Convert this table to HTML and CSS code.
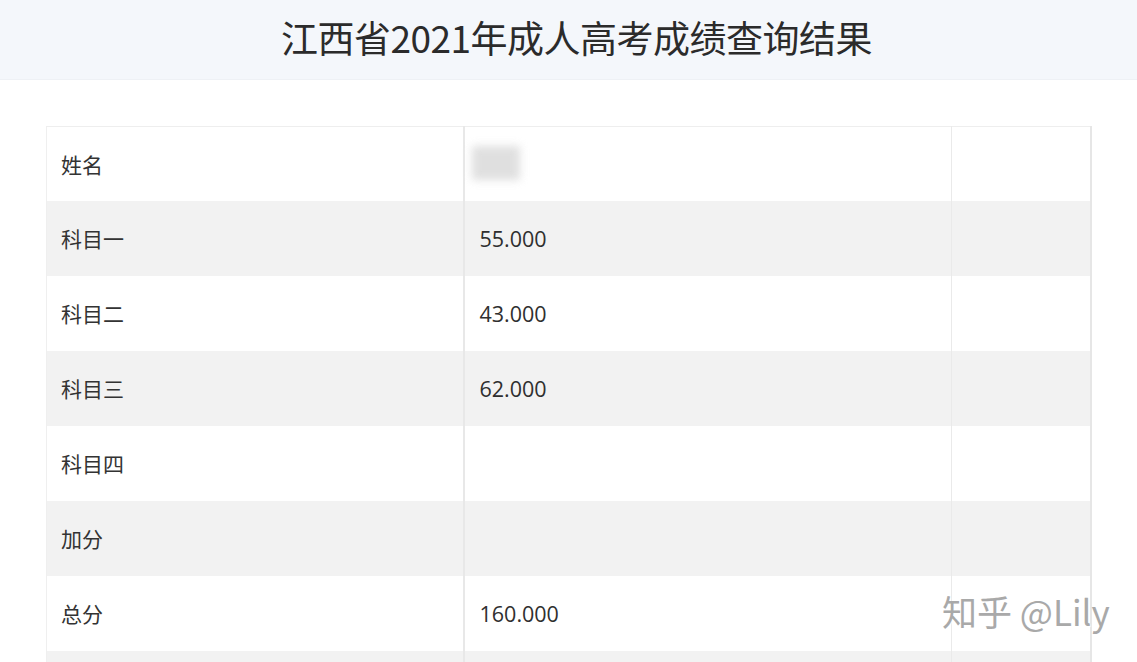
FILE: index.html
```html
<!DOCTYPE html>
<html lang="zh">
<head>
<meta charset="utf-8">
<link rel="stylesheet" href="styles.css">
</head>
<body>
<header class="header">
  <h1 class="title">江西省2021年成人高考成绩查询结果</h1>
</header>
<main class="content">
  <table class="result">
    <tr><td class="label">姓名</td><td class="value"><span class="blur"></span></td><td class="extra"></td></tr>
    <tr class="alt"><td class="label">科目一</td><td class="value">55.000</td><td class="extra"></td></tr>
    <tr><td class="label">科目二</td><td class="value">43.000</td><td class="extra"></td></tr>
    <tr class="alt"><td class="label">科目三</td><td class="value">62.000</td><td class="extra"></td></tr>
    <tr><td class="label">科目四</td><td class="value"></td><td class="extra"></td></tr>
    <tr class="alt"><td class="label">加分</td><td class="value"></td><td class="extra"></td></tr>
    <tr><td class="label">总分</td><td class="value">160.000</td><td class="extra"></td></tr>
    <tr class="alt"><td class="label"></td><td class="value"></td><td class="extra"></td></tr>
  </table>
  <div class="watermark">知乎 @Lily</div>
</main>
</body>
</html>
```

FILE: styles.css
```css
html, body {
  margin: 0;
  padding: 0;
  background: #ffffff;
  overflow: hidden;
  height: 662px;
}
body {
  font-family: "Microsoft YaHei", "Noto Sans CJK SC", "Open Sans", sans-serif;
  color: #333333;
}
.header {
  height: 79px;
  background: #f4f7fb;
  border-bottom: 1px solid #eef1f5;
  display: flex;
  align-items: center;
  justify-content: center;
}
.title {
  margin: 0;
  font-size: 37px;
  font-weight: 400;
  color: #2b2b2b;
  letter-spacing: -0.5px;
  transform: translate(8px, -3px);
}
.content {
  position: relative;
  padding: 46px 45px 0 46px;
}
.result {
  width: 100%;
  border-collapse: collapse;
  border-top: 1px solid #eeeeee;
  border-left: 1px solid #efefef;
  border-right: 2px solid #e6e6e6;
  table-layout: fixed;
}
.result tr:first-child td {
  height: 74px;
}
.result td {
  height: 75px;
  padding: 0;
  font-size: 21px;
  vertical-align: middle;
  box-sizing: border-box;
}
.result tr.alt td {
  background: #f2f2f2;
}
.label {
  width: 417px;
  padding-left: 14px !important;
  border-right: 2px solid #e8e8e8;
}
.value {
  width: 488px;
  padding-left: 15px !important;
  border-right: 1px solid #eaeaea;
  font-family: "Open Sans", "Noto Sans CJK SC", sans-serif;
  font-size: 21.5px !important;
  color: #2f2f2f;
}
.extra {
  width: auto;
}
.blur {
  display: block;
  width: 48px;
  height: 34px;
  margin-left: -8px;
  margin-top: -2px;
  background: #d8d8d8;
  filter: blur(4px);
  opacity: 0.8;
}
.watermark {
  position: absolute;
  left: 942px;
  top: 505px;
  font-size: 35px;
  font-family: "Noto Sans CJK SC", "Open Sans", sans-serif;
  color: #a9a9a9;
  text-shadow: 1px 1px 1px rgba(255,255,255,0.8);
  white-space: nowrap;
}
```
